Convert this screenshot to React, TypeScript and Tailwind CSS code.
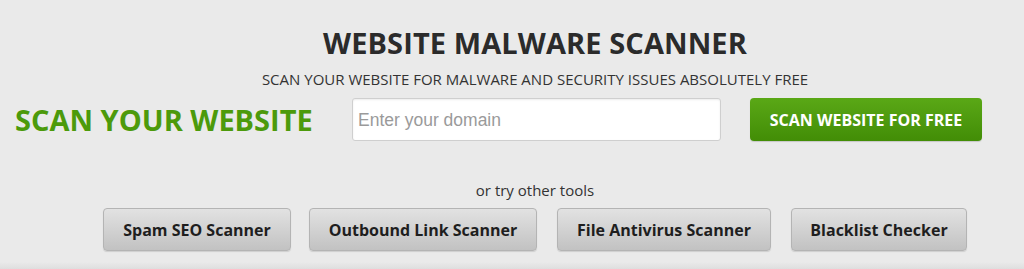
import React from "react";

const tools = [
  { label: "Spam SEO Scanner", w: "w-[188px]", ml: "" },
  { label: "Outbound Link Scanner", w: "w-[228px]", ml: "ml-[18px]" },
  { label: "File Antivirus Scanner", w: "w-[214px]", ml: "ml-[20px]" },
  { label: "Blacklist Checker", w: "w-[176px]", ml: "ml-[20px]" },
];

export default function App() {
  return (
    <div
      className="relative h-[269px] w-full overflow-hidden bg-[#eaeaea] text-[#333]"
      style={{ fontFamily: '"Open Sans", "Noto Sans", sans-serif' }}
    >
      <div className="flex flex-col items-center pl-[46px] pt-[23px]">
        <h1 className="text-[29px] font-bold leading-[40px] tracking-[0.1px] text-[#2b2b2b]">
          WEBSITE MALWARE SCANNER
        </h1>
        <p className="mt-[6px] text-[15px] leading-[20px] text-[#333]">
          SCAN YOUR WEBSITE FOR MALWARE AND SECURITY ISSUES ABSOLUTELY FREE
        </p>
      </div>

      <div className="mt-[9px] flex h-[43px] items-center">
        <div className="w-[352px] pl-[15px] text-[29px] font-bold leading-[43px] text-[#4c9a0b]">
          SCAN YOUR WEBSITE
        </div>
        <input
          type="text"
          placeholder="Enter your domain"
          className="h-[43px] w-[369px] rounded-[3px] border border-[#cfcfcf] bg-white pl-[5px] pr-[5px] pt-[2px] text-[17.5px] text-[#555] shadow-[inset_0_1px_2px_rgba(0,0,0,0.08)] outline-none placeholder:text-[#9a9a9a]"
          style={{ fontFamily: '"Liberation Sans", Arial, sans-serif' }}
        />
        <button className="ml-[29px] h-[43px] w-[232px] rounded-[4px] bg-gradient-to-b from-[#5aa816] to-[#428d06] text-[16px] font-bold text-white shadow-[0_1px_1px_rgba(0,0,0,0.15)]">
          SCAN WEBSITE FOR FREE
        </button>
      </div>

      <div className="flex flex-col items-center pl-[46px]">
        <p className="mt-[39px] text-[15px] leading-[20px] text-[#333]">or try other tools</p>
        <div className="mt-[8px] flex">
          {tools.map((t) => (
            <button
              key={t.label}
              className={`${t.w} ${t.ml} h-[43px] rounded-[4px] border border-[#b4b4b4] bg-gradient-to-b from-[#e2e2e2] to-[#c2c2c2] text-[16px] font-bold text-[#1e1e1e] shadow-[0_1px_1px_rgba(0,0,0,0.12)]`}
            >
              {t.label}
            </button>
          ))}
        </div>
      </div>

      <div className="absolute bottom-0 left-0 h-[7px] w-full bg-gradient-to-b from-[#eaeaea] to-[#dedede]" />
    </div>
  );
}
